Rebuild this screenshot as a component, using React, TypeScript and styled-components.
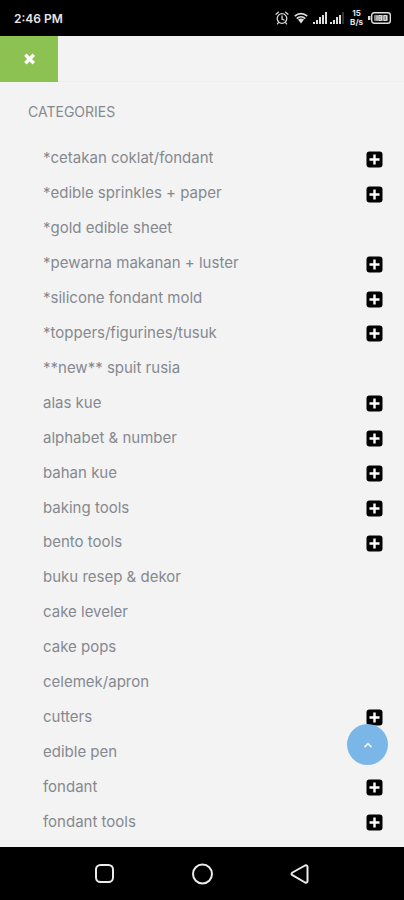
import React from "react";
import styled, { createGlobalStyle } from "styled-components";

const GlobalStyle = createGlobalStyle`
  * { box-sizing: border-box; }
  body {
    margin: 0;
    background: #f3f3f3;
    font-family: Inter, "Liberation Sans", sans-serif;
  }
`;

const Screen = styled.div`
  display: flex;
  flex-direction: column;
  min-height: 100vh;
`;

const StatusBar = styled.header`
  display: flex;
  align-items: center;
  justify-content: space-between;
  height: 36px;
  padding: 0 13px 0 14px;
  background: #000;
  color: #e6e6e6;
`;

const Clock = styled.time`
  font-size: 12px;
  font-weight: 600;
`;

const StatusIcons = styled.div`
  display: flex;
  align-items: center;
  gap: 5px;
`;

const Signals = styled.div`
  display: flex;
  gap: 2px;
`;

const NetSpeed = styled.div`
  font-size: 8px;
  font-weight: 700;
  line-height: 9px;
  text-align: center;
`;

const Toolbar = styled.div`
  display: flex;
  height: 46px;
  border-bottom: 1px solid #eeeeee;
`;

const CloseButton = styled.button`
  display: flex;
  align-items: center;
  justify-content: center;
  width: 58px;
  height: 46px;
  padding: 0;
  border: 0;
  background: #8bc252;
  cursor: pointer;
`;

const Menu = styled.main`
  display: flex;
  flex: 1;
  flex-direction: column;
  padding: 20px 21px 8px 28px;
`;

const Heading = styled.h1`
  margin: 0 0 19px;
  font-size: 14px;
  font-weight: 400;
  line-height: 20px;
  color: #868a8d;
`;

const List = styled.ul`
  display: flex;
  flex: 1;
  flex-direction: column;
  margin: 0;
  padding: 0 0 0 15px;
  list-style: none;
`;

const Row = styled.li`
  display: flex;
  flex: 1;
  align-items: center;
  justify-content: space-between;
`;

const CategoryLink = styled.a`
  font-size: 15px;
  line-height: 20px;
  color: #85898f;
  text-decoration: none;
`;

const ExpandButton = styled.button`
  display: flex;
  padding: 2px 0 0;
  border: 0;
  background: none;
  cursor: pointer;
`;

const TopButton = styled.button`
  position: fixed;
  right: 16px;
  bottom: 135px;
  display: flex;
  align-items: center;
  justify-content: center;
  width: 41px;
  height: 41px;
  padding: 0;
  border: 0;
  border-radius: 50%;
  background: #7ab7e8;
  cursor: pointer;
`;

const NavBar = styled.nav`
  display: flex;
  align-items: center;
  justify-content: center;
  gap: 74px;
  height: 53px;
  background: #000;
`;

const NavButton = styled.button`
  display: flex;
  padding: 0;
  border: 0;
  background: none;
  cursor: pointer;
`;

const categories: { name: string; expandable?: boolean }[] = [
  { name: "*cetakan coklat/fondant", expandable: true },
  { name: "*edible sprinkles + paper", expandable: true },
  { name: "*gold edible sheet" },
  { name: "*pewarna makanan + luster", expandable: true },
  { name: "*silicone fondant mold", expandable: true },
  { name: "*toppers/figurines/tusuk", expandable: true },
  { name: "**new** spuit rusia" },
  { name: "alas kue", expandable: true },
  { name: "alphabet & number", expandable: true },
  { name: "bahan kue", expandable: true },
  { name: "baking tools", expandable: true },
  { name: "bento tools", expandable: true },
  { name: "buku resep & dekor" },
  { name: "cake leveler" },
  { name: "cake pops" },
  { name: "celemek/apron" },
  { name: "cutters", expandable: true },
  { name: "edible pen" },
  { name: "fondant", expandable: true },
  { name: "fondant tools", expandable: true },
];

const AlarmIcon = () => (
  <svg width="14" height="14" viewBox="0 0 14 14" fill="none" stroke="#d8d8d8" strokeWidth="1.3" strokeLinecap="round">
    <circle cx="7" cy="7.5" r="4.8" />
    <path d="M7 5v3l2 1M1 3.2 3.4 1.2M13 3.2l-2.4-2M3.4 11.6l-1 1.2M10.6 11.6l1 1.2" />
  </svg>
);

const WifiIcon = () => (
  <svg width="14" height="12" viewBox="0 0 14 12" fill="none" stroke="#dedede" strokeWidth="1.8">
    <path d="M.8 4.2C4.5.7 9.5.7 13.2 4.2" />
    <path d="M2.8 6.6c2.4-2.3 6-2.3 8.4 0" />
    <path d="M4 7.6Q7 5.6 10 7.6L7 11.6Z" fill="#dedede" stroke="none" />
  </svg>
);

const SignalIcon = ({ weak }: { weak?: boolean }) => (
  <svg width="15" height="12" viewBox="0 0 15 12" fill="#dedede">
    <rect x="0" y="10" width="2" height="2" />
    <rect x="3" y="8" width="2" height="4" />
    <rect x="6" y="5" width="2" height="7" />
    <rect x="9" y="3" width="2" height="9" />
    <rect x="12" y="0" width="2" height="12" fill={weak ? "#333" : "#dedede"} />
  </svg>
);

const BatteryIcon = () => (
  <svg width="23" height="12" viewBox="0 0 23 12" fill="none" stroke="#dedede">
    <rect x="3.7" y=".7" width="18.6" height="10.6" rx="2.5" strokeWidth="1.4" />
    <path d="M0 4h2.4v4H0z" fill="#dedede" stroke="none" />
    <rect x="6" y="3" width="14" height="6" rx="1" fill="#858585" stroke="none" />
    <path d="M9 3.5v5M11 3.5h2.5v5H11zM11 6h2.5M16 3.5h2.5v5H16z" />
  </svg>
);

const CrossIcon = () => (
  <svg width="14" height="12" viewBox="0 0 14 12" stroke="#fff" strokeWidth="3.4">
    <path d="M3.4 1.8 11.8 10.2M11.8 1.8 3.4 10.2" />
  </svg>
);

const PlusIcon = () => (
  <svg width="17" height="17" viewBox="0 0 17 17">
    <rect x=".5" y=".5" width="16" height="16" rx="3" fill="#000" />
    <path d="M8.5 3.5v10M3.5 8.5h10" stroke="#fff" strokeWidth="2.4" />
  </svg>
);

const ChevronUpIcon = () => (
  <svg width="10" height="6" viewBox="0 0 10 6" fill="none" stroke="#e9f5fc" strokeWidth="1.7">
    <path d="M1.5 5.2 5 1.6 8.5 5.2" />
  </svg>
);

const NavIcon = ({ children }: { children: React.ReactNode }) => (
  <svg width="24" height="24" viewBox="0 0 24 24" fill="none" stroke="#ececec" strokeWidth="2" strokeLinejoin="round">
    {children}
  </svg>
);

export default function App() {
  return (
    <Screen>
      <GlobalStyle />
      <StatusBar>
        <Clock>2:46 PM</Clock>
        <StatusIcons>
          <AlarmIcon />
          <WifiIcon />
          <Signals>
            <SignalIcon />
            <SignalIcon weak />
          </Signals>
          <NetSpeed>
            15
            <br />
            B/s
          </NetSpeed>
          <BatteryIcon />
        </StatusIcons>
      </StatusBar>
      <Toolbar>
        <CloseButton aria-label="Close menu">
          <CrossIcon />
        </CloseButton>
      </Toolbar>
      <Menu>
        <Heading>CATEGORIES</Heading>
        <List>
          {categories.map(({ name, expandable }) => (
            <Row key={name}>
              <CategoryLink href="#">{name}</CategoryLink>
              {expandable && (
                <ExpandButton aria-label={`Expand ${name}`}>
                  <PlusIcon />
                </ExpandButton>
              )}
            </Row>
          ))}
        </List>
      </Menu>
      <TopButton aria-label="Back to top">
        <ChevronUpIcon />
      </TopButton>
      <NavBar>
        <NavButton aria-label="Recent apps">
          <NavIcon>
            <rect x="4" y="3" width="17" height="17" rx="4.5" />
          </NavIcon>
        </NavButton>
        <NavButton aria-label="Home">
          <NavIcon>
            <circle cx="12.5" cy="12" r="9.5" />
          </NavIcon>
        </NavButton>
        <NavButton aria-label="Back">
          <NavIcon>
            <path d="M4.5 10.5 17 3.5Q19.5 2.8 19.5 5v14q0 2.2-2.5 1.5L4.5 13.2q-2-1.3 0-2.7Z" />
          </NavIcon>
        </NavButton>
      </NavBar>
    </Screen>
  );
}
